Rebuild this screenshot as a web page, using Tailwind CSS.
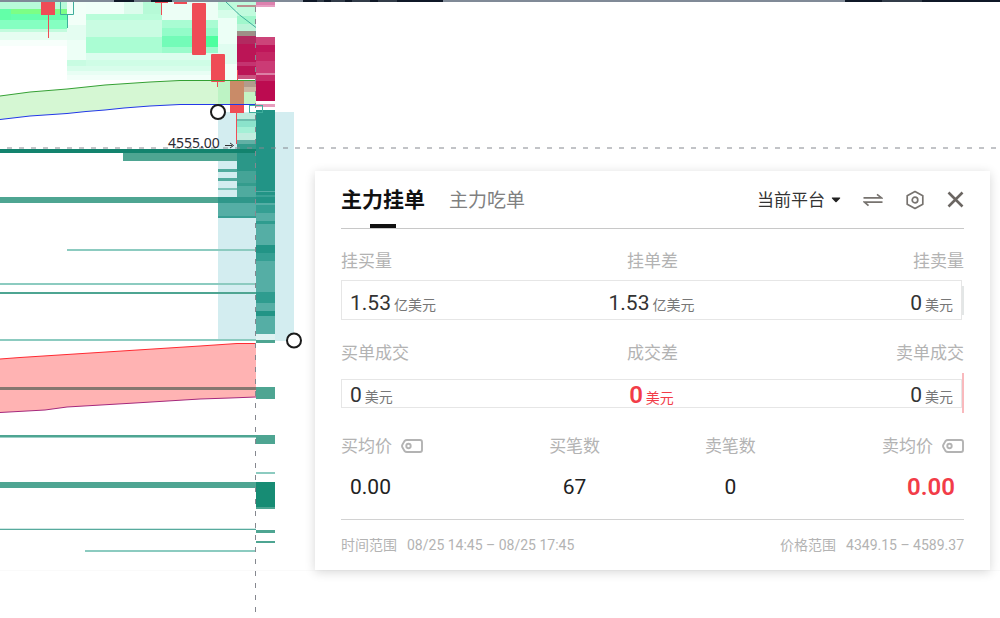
<!DOCTYPE html>
<html lang="zh-CN">
<head>
    <meta charset="UTF-8">
    <meta name="viewport" content="width=device-width, initial-scale=1.0">
    <title>主力挂单</title>
    <script src="https://cdn.jsdelivr.net/npm/@tailwindcss/browser@4"></script>
</head>
<body class="bg-white font-['Roboto','Noto_Sans_CJK_SC',sans-serif] text-[#222]">
    <main class="relative min-h-screen overflow-hidden">
        <!-- Chart -->
        <svg class="absolute inset-0 h-full w-full" aria-label="K线图">
            <!-- Heatmap, sell side -->
            <g shape-rendering="crispEdges">
                <rect x="0" y="2" width="67" height="7" fill="#b8fbd9"/>
                <rect x="0" y="9" width="11" height="11" fill="#63ffa8"/>
                <rect x="11" y="9" width="56" height="5" fill="#7cff86"/>
                <rect x="11" y="14" width="56" height="6" fill="#66ffad"/>
                <rect x="0" y="20" width="67" height="9" fill="#85ffc1"/>
                <rect x="0" y="29" width="67" height="3" fill="#c2fbdd"/>
                <rect x="0" y="32" width="67" height="8" fill="#e6fdf1"/>
                <rect x="0" y="40" width="67" height="6" fill="#f7fffb"/>
                <rect x="67" y="2" width="19" height="23" fill="#f2fff8"/>
                <rect x="67" y="25" width="19" height="15" fill="#e4fdf1"/>
                <rect x="67" y="40" width="19" height="20" fill="#edfff6"/>
                <rect x="67" y="60" width="19" height="6" fill="#c8fce2"/>
                <rect x="67" y="66" width="151" height="5" fill="#d8fdeb"/>
                <rect x="67" y="71" width="151" height="4" fill="#e8fef4"/>
                <rect x="67" y="75" width="151" height="5" fill="#f2fff9"/>
                <rect x="86" y="2" width="38" height="12" fill="#f0fff8"/>
                <rect x="124" y="2" width="19" height="12" fill="#dcfcec"/>
                <rect x="143" y="2" width="19" height="12" fill="#b6fad7"/>
                <rect x="86" y="14" width="76" height="6" fill="#b9fdda"/>
                <rect x="86" y="20" width="76" height="17" fill="#c9fce2"/>
                <rect x="86" y="37" width="76" height="16" fill="#aafdd3"/>
                <rect x="86" y="53" width="132" height="7" fill="#dcfdee"/>
                <rect x="86" y="60" width="132" height="6" fill="#cffde6"/>
                <rect x="162" y="2" width="56" height="18" fill="#ecfef5"/>
                <rect x="162" y="20" width="56" height="8" fill="#a9fcd3"/>
                <rect x="162" y="28" width="56" height="8" fill="#93fcc9"/>
                <rect x="162" y="36" width="56" height="11" fill="#73fbb8"/>
                <rect x="206" y="36" width="12" height="11" fill="#4dff9f"/>
                <rect x="162" y="47" width="56" height="6" fill="#9bfbcc"/>
                <rect x="218" y="2" width="19" height="8" fill="#bffbdc"/>
                <rect x="218" y="10" width="19" height="8" fill="#d6fde9"/>
                <rect x="218" y="18" width="19" height="26" fill="#ecfff6"/>
                <rect x="218" y="44" width="19" height="20" fill="#e0fdf0"/>
                <rect x="218" y="64" width="19" height="16" fill="#f1fff8"/>
                <rect x="237" y="2" width="19" height="14" fill="#c0fbdd"/>
                <rect x="237" y="16" width="19" height="8" fill="#a0f7cc"/>
                <rect x="237" y="24" width="19" height="7" fill="#bcf5d9"/>
                <rect x="237" y="5" width="19" height="2" fill="#b98f8f"/>
                <rect x="237" y="31" width="19" height="5" fill="#9e8f87"/>
                <rect x="237" y="36" width="19" height="8" fill="#b22a60"/>
                <rect x="237" y="44" width="19" height="18" fill="#bb1556"/>
                <rect x="237" y="62" width="19" height="4" fill="#c43470"/>
                <rect x="237" y="66" width="19" height="9" fill="#bb1556"/>
                <rect x="237" y="75" width="19" height="4" fill="#c9547f"/>
                <rect x="256" y="2" width="19" height="3" fill="#dc81ae"/>
                <rect x="256" y="5" width="19" height="2" fill="#e89fc2"/>
                <rect x="256" y="37" width="19" height="8" fill="#cc4479"/>
                <rect x="256" y="45" width="19" height="7" fill="#bf165a"/>
                <rect x="256" y="52" width="19" height="9" fill="#c42663"/>
                <rect x="256" y="61" width="19" height="12" fill="#cb3b75"/>
                <rect x="256" y="73" width="19" height="2" fill="#dc7fa5"/>
                <rect x="256" y="75" width="19" height="6" fill="#c52b68"/>
                <rect x="256" y="81" width="19" height="20" fill="#bc0b50"/>
                <rect x="256" y="104" width="19" height="3" fill="#e79dbd"/>
            </g>

            <!-- Selected range -->
            <rect x="218" y="112" width="76" height="229" fill="#d3edf0"/>

            <!-- Upper band -->
            <path d="M0 96L30 92L67 89L86 87L105 85L150 82L180 80.500H256V104.500H180L150 106L124 108L105 110L86 111.500L67 113.500L30 116L0 119.500Z" fill="#d5f7d3"/>
            <rect x="218" y="81" width="19" height="23" fill="#bdf3c4"/>
            <rect x="244" y="81" width="12" height="6" fill="#b39b8c"/>
            <rect x="244" y="87" width="12" height="5" fill="#cdb8a4"/>
            <rect x="244" y="92" width="12" height="12" fill="#c4f4c4"/>

            <!-- Red band -->
            <path d="M0 359L20 357.500L200 346L237 343.500H256V397L230 398L200 399L135 403L67 407L45 410L0 412.500Z" fill="#ffb3b3"/>
            <path d="M0 359L20 357.500L200 346L237 343.500H256" fill="none" stroke="#ff2a32"/>
            <path d="M0 412.500L45 410L67 407L135 403L200 399L230 398L256 397" fill="none" stroke="#a5287c"/>

            <!-- Heatmap, buy side -->
            <g shape-rendering="crispEdges">
                <rect x="237" y="113" width="19" height="6" fill="#bdebdd"/>
                <rect x="237" y="119" width="19" height="2" fill="#6fbfae"/>
                <rect x="237" y="121" width="19" height="6" fill="#8be3cb"/>
                <rect x="237" y="127" width="19" height="6" fill="#a4f0d6"/>
                <rect x="237" y="133" width="19" height="7" fill="#c1eddf"/>
                <rect x="237" y="140" width="19" height="4" fill="#62b0a5"/>
                <rect x="237" y="144" width="19" height="9" fill="#349b8c"/>
                <rect x="0" y="149" width="256" height="4" fill="#13836e"/>
                <rect x="123" y="153" width="114" height="8" fill="#4ea592"/>
                <rect x="237" y="153" width="19" height="18" fill="#2b9788"/>
                <rect x="237" y="171" width="19" height="12" fill="#45a497"/>
                <rect x="237" y="183" width="19" height="3" fill="#349c8d"/>
                <rect x="237" y="186" width="19" height="11" fill="#4fab9f"/>
                <rect x="218" y="169" width="19" height="3" fill="#52ab9e"/>
                <rect x="218" y="178" width="19" height="3" fill="#52ab9e"/>
                <rect x="218" y="188" width="19" height="2" fill="#7cc4ba"/>
                <rect x="0" y="197" width="256" height="6" fill="#4ea592"/>
                <rect x="218" y="197" width="38" height="6" fill="#2f978a"/>
                <rect x="218" y="203" width="38" height="13" fill="#55aea5"/>
                <rect x="218" y="216" width="38" height="2" fill="#379e93"/>
                <rect x="67" y="249" width="189" height="2" fill="#8ccbc0"/>
                <rect x="0" y="283" width="256" height="2" fill="#8ccbc0"/>
                <rect x="0" y="292" width="256" height="2" fill="#4ea592"/>
                <rect x="0" y="339" width="256" height="2" fill="#8ccbc0"/>
                <rect x="0" y="387" width="256" height="3" fill="#857770"/>
                <rect x="0" y="435" width="256" height="2" fill="#4ea592"/>
                <rect x="0" y="437" width="256" height="1" fill="#9ed0c7"/>
                <rect x="0" y="482" width="256" height="6" fill="#4ea592"/>
                <rect x="0" y="528" width="256" height="1" fill="#cfe8e4"/>
                <rect x="0" y="529" width="256" height="1" fill="#57aa9d"/>
                <rect x="85" y="550" width="171" height="2" fill="#8ccbc0"/>

                <rect x="256" y="110" width="19" height="81" fill="#229486"/>
                <rect x="256" y="191" width="19" height="143" fill="#55aea5"/>
                <rect x="256" y="192" width="19" height="3" fill="#229486"/>
                <rect x="256" y="195" width="19" height="2" fill="#3aa195"/>
                <rect x="256" y="197" width="19" height="6" fill="#229486"/>
                <rect x="256" y="205" width="19" height="8" fill="#359f93"/>
                <rect x="256" y="221" width="19" height="3" fill="#2f9c8f"/>
                <rect x="256" y="245" width="19" height="8" fill="#229486"/>
                <rect x="256" y="253" width="19" height="8" fill="#359f93"/>
                <rect x="256" y="292" width="19" height="11" fill="#2f9c8f"/>
                <rect x="256" y="311" width="19" height="5" fill="#229486"/>
                <rect x="256" y="334" width="19" height="6" fill="#dff2f2"/>
                <rect x="256" y="340" width="19" height="3" fill="#4ea592"/>
                <rect x="256" y="387" width="19" height="12" fill="#4ea592"/>
                <rect x="256" y="435" width="19" height="9" fill="#4ea592"/>
                <rect x="256" y="472" width="19" height="2" fill="#8ccbc0"/>
                <rect x="256" y="482" width="19" height="25" fill="#178c74"/>
                <rect x="256" y="507" width="19" height="2" fill="#4ea592"/>
                <rect x="256" y="530" width="19" height="3" fill="#4ea592"/>
                <rect x="256" y="541" width="19" height="2" fill="#4ea592"/>
            </g>

            <!-- Candles -->
            <g fill="#ef4c56">
                <rect x="41" y="2" width="14" height="13"/>
                <rect x="48" y="15" width="1" height="23"/>
                <rect x="155" y="2" width="13" height="1"/>
                <rect x="161" y="2" width="1" height="13"/>
                <rect x="174" y="2" width="13" height="2"/>
                <rect x="192" y="3" width="14" height="52" rx="1"/>
                <rect x="211" y="54" width="14" height="28" rx="1"/>
                <rect x="217" y="82" width="1" height="5"/>
                <rect x="237" y="70" width="1" height="12"/>
                <rect x="230" y="103" width="14" height="10"/>
                <rect x="236" y="112" width="1" height="32"/>
            </g>
            <rect x="230" y="81" width="14" height="23" fill="#c98b68"/>
            <g fill="none" stroke="#3fae9c">
                <path d="M60.500 2V14.500H73.500V2M67.500 14.500V28"/>
                <path d="M226 2Q238 15 256 27.500"/>
                <rect x="249.500" y="105.500" width="13" height="7"/>
            </g>
            <path d="M0 96L30 92L67 89L86 87L105 85L150 82L180 80.500H256" fill="none" stroke="#35a034"/>
            <path d="M0 119.500L30 116L67 113.500L86 111.500L105 110L124 108L150 106L180 104.500H256" fill="none" stroke="#2238e8"/>

            <!-- Crosshair -->
            <line x1="7" y1="148" x2="100%" y2="148" stroke="#85888f" stroke-dasharray="5 7"/>
            <line x1="255.500" y1="7" x2="255.500" y2="100%" stroke="#85888f" stroke-dasharray="5 7"/>

            <text x="168" y="148" class="fill-[#2b2b33] font-['Noto_Sans',sans-serif] text-[14px]">4555.00</text>
            <path d="M225 145.500H232M230 143L233.500 145.500L230 148" fill="none" stroke="#333"/>
            <circle cx="218" cy="112" r="7" fill="#fff" stroke="#1b1b1b" stroke-width="2"/>
            <circle cx="294" cy="340.500" r="7" fill="#fff" stroke="#1b1b1b" stroke-width="2"/>

            <!-- Top edge -->
            <rect width="100%" height="2" fill="#808a97"/>
            <g fill="#0f1827">
                <rect x="114" width="20" height="2"/>
                <rect x="151" width="21" height="2"/>
                <rect x="303" width="140" height="2"/>
                <rect x="845" width="100%" height="2"/>
            </g>
            <path d="M134 1H151M317 1H324M331 1H345M352 1H370M378 1H397M882 1H922" stroke="#57606d" stroke-width="1"/>
            <rect y="570" width="100%" height="1" fill="#fafafa"/>
        </svg>

        <!-- Order panel -->
        <section class="absolute top-[171px] right-[10px] left-[315px] bg-white px-[26px] shadow-[0_2px_10px_rgba(0,0,0,0.16)]">
            <header class="flex h-[58px] items-center justify-between border-b border-[#c8c8c8]">
                <div class="flex h-full items-center gap-6">
                    <button type="button" class="relative h-full pt-[3px] text-[21px] font-bold text-[#111] after:absolute after:bottom-0 after:left-1/2 after:h-[4px] after:w-[26px] after:-translate-x-1/2 after:bg-[#111]">主力挂单</button>
                    <button type="button" class="h-full pt-[3px] text-[19px] text-[#808080]">主力吃单</button>
                </div>
                <div class="flex items-center">
                    <label class="relative flex items-center">
                        <select aria-label="平台" class="h-7 appearance-none bg-transparent pr-4 text-[17px] leading-7 text-[#333]">
                            <option>当前平台</option>
                        </select>
                        <svg class="pointer-events-none absolute right-0 h-[6px] w-[10px]" viewBox="0 0 10 6" fill="#222"><path d="M1 .5H9Q9.500 1 9 1.500L5.600 5Q5 5.500 4.400 5L1 1.500Q.5 1 1 .5Z"/></svg>
                    </label>
                    <button type="button" class="ml-[22px]" aria-label="切换">
                        <svg class="h-5 w-5" viewBox="0 0 20 20" fill="none" stroke="#77736f" stroke-width="1.700"><path d="M.5 7.800H18.500L14 4.300M19.500 12.200H1.500L5.500 15.700"/></svg>
                    </button>
                    <button type="button" class="ml-[22px]" aria-label="设置">
                        <svg class="h-5 w-5" viewBox="0 0 20 20" fill="none" stroke="#77736f" stroke-width="1.700"><path stroke-linejoin="round" d="M10 1.500L17.800 5.800V14.200L10 18.500L2.200 14.200V5.800Z"/><circle cx="10" cy="10" r="2.800"/></svg>
                    </button>
                    <button type="button" class="ml-[22px]" aria-label="关闭">
                        <svg class="h-[17px] w-[17px]" viewBox="0 0 17 17" fill="none" stroke="#6b6662" stroke-width="2.600"><path d="M1.500 1.500L15.500 15.500M15.500 1.500L1.500 15.500"/></svg>
                    </button>
                </div>
            </header>

            <!-- Pending orders -->
            <div class="mt-5 grid grid-cols-3 text-[17px] leading-6 text-[#b3b3b3]">
                <span>挂买量</span>
                <span class="text-center">挂单差</span>
                <span class="text-right">挂卖量</span>
            </div>
            <div class="mt-[7px] flex h-10 items-center">
                <div class="grid h-10 flex-1 grid-cols-3 items-center border border-[#e6e6e6] px-2 pt-[5px] text-[21px] leading-6 text-[#333]">
                    <span>1.53<small class="ml-[3px] text-[14px] leading-none text-[#777]">亿美元</small></span>
                    <span class="text-center">1.53<small class="ml-[3px] text-[14px] leading-none text-[#777]">亿美元</small></span>
                    <span class="text-right">0<small class="ml-[3px] text-[14px] leading-none text-[#777]">美元</small></span>
                </div>
                <div class="h-[29px] w-[2px] bg-[#e3e6e6]"></div>
            </div>

            <!-- Filled orders -->
            <div class="mt-[21px] grid grid-cols-3 text-[17px] leading-6 text-[#b3b3b3]">
                <span>买单成交</span>
                <span class="text-center">成交差</span>
                <span class="text-right">卖单成交</span>
            </div>
            <div class="mt-2 flex h-10 items-center">
                <div class="grid h-[29px] flex-1 grid-cols-3 items-end border border-[#e6e6e6] px-2 text-[21px] leading-6 text-[#333]">
                    <span>0<small class="ml-[3px] text-[14px] leading-none text-[#777]">美元</small></span>
                    <span class="text-center text-[24px] font-semibold text-[#f23c48]">0<small class="ml-[3px] text-[14px] leading-none font-normal">美元</small></span>
                    <span class="text-right">0<small class="ml-[3px] text-[14px] leading-none text-[#777]">美元</small></span>
                </div>
                <div class="h-10 w-[2px] bg-[#f9b9bd]"></div>
            </div>

            <!-- Average price and counts -->
            <div class="mt-[21px] grid grid-cols-4 text-[17px] leading-6 text-[#b3b3b3]">
                <span class="flex items-center gap-[9px]">买均价
                    <svg class="h-[14px] w-[22px]" viewBox="0 0 22 14" fill="none" stroke="#b3b3b3" stroke-width="1.900"><path d="M6 1H19Q21 1 21 3V11Q21 13 19 13H6Q4.500 13 3.500 12L1.500 8.500Q.6 7 1.500 5.500L3.500 2Q4.500 1 6 1Z"/><circle cx="7.500" cy="7" r="2.200"/></svg>
                </span>
                <span class="text-center">买笔数</span>
                <span class="text-center">卖笔数</span>
                <span class="flex items-center justify-end gap-[9px]">卖均价
                    <svg class="h-[14px] w-[22px]" viewBox="0 0 22 14" fill="none" stroke="#b3b3b3" stroke-width="1.900"><path d="M6 1H19Q21 1 21 3V11Q21 13 19 13H6Q4.500 13 3.500 12L1.500 8.500Q.6 7 1.500 5.500L3.500 2Q4.500 1 6 1Z"/><circle cx="7.500" cy="7" r="2.200"/></svg>
                </span>
            </div>
            <div class="mt-[15px] grid grid-cols-4 items-center text-[21px] leading-7 text-[#222]">
                <span class="pl-[9px]">0.00</span>
                <span class="text-center">67</span>
                <span class="text-center">0</span>
                <span class="pr-[9px] text-right text-[24px] font-semibold text-[#f23c48]">0.00</span>
            </div>

            <footer class="mt-[18px] flex h-[51px] items-center justify-between border-t border-[#d2d2d2] text-[14px] text-[#b3b3b3]">
                <p class="flex items-center gap-[10px]">时间范围 <span>08/25 14:45 – 08/25 17:45</span></p>
                <p class="flex items-center gap-[10px]">价格范围 <span>4349.15 – 4589.37</span></p>
            </footer>
        </section>
    </main>
</body>
</html>
